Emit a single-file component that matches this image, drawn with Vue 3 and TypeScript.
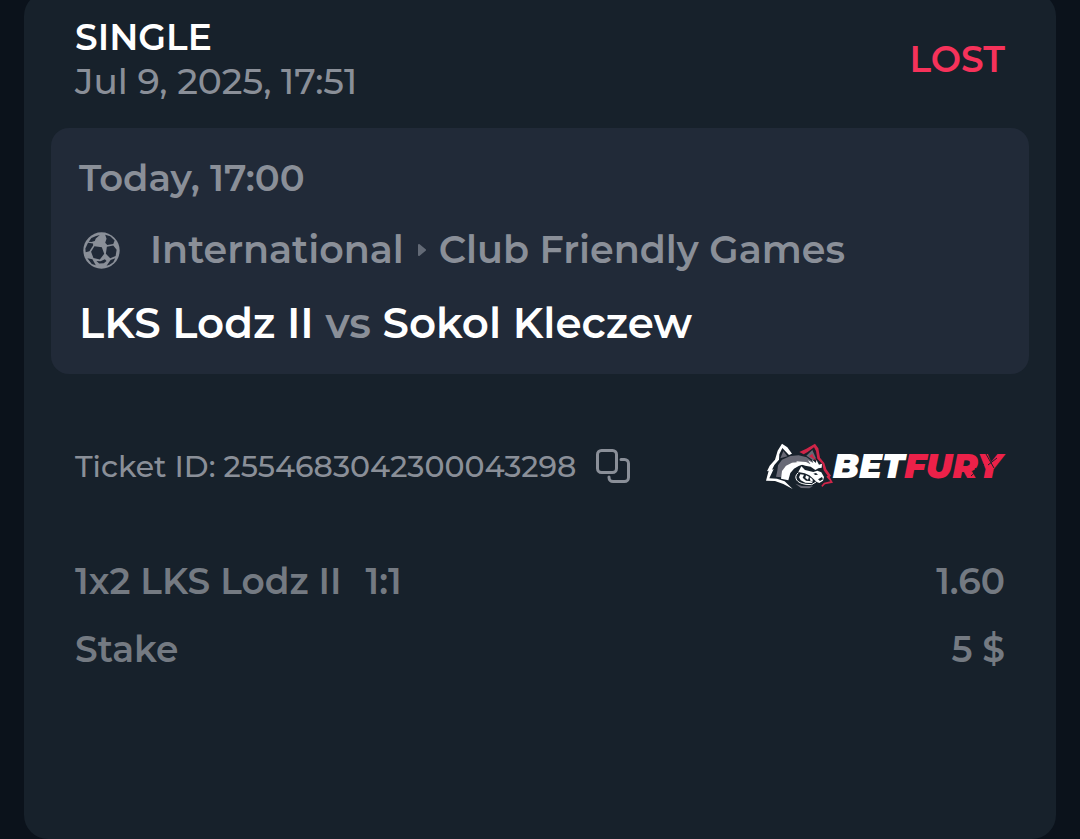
<script setup lang="ts">
interface Line {
  label: string
  score?: string
  value: string
}

const ticketId = '2554683042300043298'
const lines: Line[] = [
  { label: '1x2 LKS Lodz II', score: '1:1', value: '1.60' },
  { label: 'Stake', value: '5 $' },
]

function copyId(): void {
  void navigator.clipboard?.writeText(ticketId)
}
</script>

<template>
  <main class="ticket">
    <header class="head">
      <div>
        <h1 class="kind">SINGLE</h1>
        <time class="placed">Jul 9, 2025, 17:51</time>
      </div>
      <strong class="status">LOST</strong>
    </header>

    <section class="event">
      <time class="when">Today, 17:00</time>
      <div class="league">
        <svg class="ball" viewBox="42 38 110 110" aria-hidden="true">
          <circle class="ball-base" cx="97" cy="93" r="54" />
          <path class="ball-gap" d="M76 80 98 83 105 103 92 120 73 115 66 97Z M113 82 132 78 142 91 139 109 123 116 110 103Z M67 56 81 50 92 47 80 57 77 65 67 68 59 67Z M108 46 123 51 136 63 132 74 114 77 108 70 112 58Z M57 70 72 72 72 78 61 95 50 98 49 87Z M55 116 70 119 80 137 68 133Z M82 124 94 125 107 119 112 124 104 131 90 132Z M124 121 138 116 132 128 121 135 112 138Z" />
        </svg>
        <span>International</span>
        <svg class="arrow" viewBox="0 0 9 14" aria-hidden="true"><path d="M1 2 7 7 1 12Z" /></svg>
        <span>Club Friendly Games</span>
      </div>
      <h2 class="teams">LKS Lodz II <span class="versus">vs</span> Sokol Kleczew</h2>
    </section>

    <section class="meta">
      <div class="id">
        <span>Ticket ID: {{ ticketId }}</span>
        <button class="copy" type="button" aria-label="Copy ticket ID" @click="copyId">
          <svg viewBox="0 0 34 34" aria-hidden="true">
            <rect x="1.5" y="1.5" width="19" height="22" rx="4" />
            <path d="M25 10.5h3.500a4 4 0 0 1 4 4v14a4 4 0 0 1-4 4H17a4 4 0 0 1-4-4v-.5" />
          </svg>
        </button>
      </div>
      <div class="brand">
        <svg class="mascot" viewBox="30 36 201 138" aria-hidden="true">
          <path class="gray" d="M66 103 78 86 103 75 128 73 152 79 174 95 142 99 119 94 98 101 82 116 76 139 60 137 64 119Z" />
          <path class="gray" d="M73 82 82 60 94 76Z M151 74 169 57 180 82 171 88Z" />
          <path class="white" d="M57 86 65 59 78 38 94 49 108 68 99 72 79 51 70 70 69 86 55 102 48 116 53 114 40 142 63 143 86 151 110 174 82 159 57 150 30 149 38 119 33 121 41 104Z" />
          <path class="white" d="M75 143 78 120 90 104 108 95 126 93 144 99 128 105 114 113 103 126 97 148Z" />
          <path class="white" d="M120 91 150 93 163 99 156 88 172 96 168 86 180 96 181 86 189 101 198 98 197 110 187 112 178 117 164 107 148 104 134 100Z" />
          <path class="white" d="M136 106 147 117 172 123 184 119 196 124 204 138 201 149 190 156 182 153 172 143 160 133 146 127 127 123Z" />
          <path class="dark" d="M186 145 198 138 201 145 192 150Z M172 128 180 126 186 131 178 132Z" />
          <path class="mouth" d="M127 125Q115 135 122 147Q129 157 150 160L167 161 180 153" />
          <path class="white" d="M133 130 144 131 140 140 150 149 166 151 170 156 148 155 134 148 129 139Z M150 133 159 137 156 146 148 141Z M161 139 169 144 171 152 163 149Z" />
          <path class="gray" d="M118 158 138 165 171 166 160 172 135 171Z" />
          <path class="red" d="M130 63 151 53 177 38 187 52 192 80 205 96 211 115 225 134 221 138 231 155 207 160 199 168 196 164 204 155 223 151 211 137 215 134 203 118 199 99 184 83 180 60 174 49 155 63 143 70Z" />
          <path class="red" d="M159 76 169 68 173 77 183 90 170 82Z" />
        </svg>
        <span class="wordmark">
          <b>BET</b><b class="fury">FURY</b>
          <svg class="cracks" viewBox="0 0 60 34" aria-hidden="true">
            <path d="M20 27 33 15M24 19 31 28M35 5 43 19M37 16 46 9" />
          </svg>
        </span>
      </div>
    </section>

    <dl class="lines">
      <div v-for="line in lines" :key="line.label" class="line">
        <dt>{{ line.label }}<span v-if="line.score" class="score">{{ line.score }}</span></dt>
        <dd>{{ line.value }}</dd>
      </div>
    </dl>
  </main>
</template>

<style>
body {
  background: #0b121b;
}
</style>

<style scoped>
.ticket {
  box-sizing: border-box;
  min-height: calc(100vh + 8px);
  margin: -8px 24px 0;
  padding: 23px 27px;
  border-radius: 24px;
  background: #17212b;
  color: #8a8f98;
  font-family: Montserrat, Inter, "Liberation Sans", sans-serif;
  font-size: 36px;
  font-weight: 500;
}
.head,
.meta,
.line {
  display: flex;
  align-items: center;
  justify-content: space-between;
}
.head {
  padding: 0 24px;
}
.kind {
  margin: 0;
  color: #fff;
  font-size: 36px;
  font-weight: 600;
  line-height: 44px;
}
.placed {
  display: block;
  line-height: 44px;
}
.status {
  color: #f6325a;
  font-weight: 600;
  line-height: 44px;
}
.event {
  margin-top: 25px;
  padding: 28px 28px 26px;
  border-radius: 18px;
  background: #212a38;
  font-size: 38px;
  font-weight: 600;
}
.when {
  display: block;
  font-size: 37px;
  line-height: 44px;
}
.league {
  display: flex;
  align-items: center;
  margin-top: 28px;
  line-height: 44px;
}
.ball {
  width: 37px;
  height: 37px;
  margin: 0 30px 0 4px;
}
.ball-base {
  fill: #8a8f98;
}
.ball-gap {
  fill: #212a38;
}
.arrow {
  width: 9px;
  height: 14px;
  margin: 0 12px 0 14px;
  fill: #636a76;
  stroke: #636a76;
  stroke-width: 2;
  stroke-linejoin: round;
}
.teams {
  margin: 26px 0 0;
  color: #fff;
  font-size: 42px;
  font-weight: 600;
  line-height: 50px;
}
.versus {
  color: #8a8f98;
}
.meta {
  margin-top: 69px;
  padding: 0 24px;
}
.id {
  display: flex;
  align-items: center;
  gap: 20px;
  font-size: 30px;
}
.copy {
  padding: 0;
  border: 0;
  background: none;
  color: inherit;
  cursor: pointer;
}
.copy svg {
  display: block;
  width: 34px;
  height: 34px;
  fill: none;
  stroke: currentColor;
  stroke-width: 3;
  stroke-linecap: round;
}
.brand {
  display: flex;
  align-items: center;
}
.mascot {
  width: 67px;
  height: 46px;
}
.wordmark {
  position: relative;
  display: flex;
  padding-right: 3px;
  color: #fff;
  font-size: 34px;
  font-style: italic;
  line-height: 46px;
}
.wordmark b {
  font-weight: 900;
}
.wordmark .fury {
  color: #ec2149;
}
.cracks {
  position: absolute;
  right: -6px;
  top: 6px;
  width: 60px;
  height: 34px;
  fill: none;
  stroke: #17212b;
  stroke-width: 1;
}
.white {
  fill: #fff;
}
.gray {
  fill: #686975;
}
.dark {
  fill: #17212b;
}
.mouth {
  fill: none;
  stroke: #fff;
  stroke-width: 3;
}
.red {
  fill: #cf2548;
}
.lines {
  margin: 58px 0 0;
  padding: 0 24px;
  color: #747a82;
  font-weight: 600;
}
.line {
  line-height: 68px;
}
.line dd {
  margin: 0;
}
.score {
  margin-left: 24px;
}
</style>
